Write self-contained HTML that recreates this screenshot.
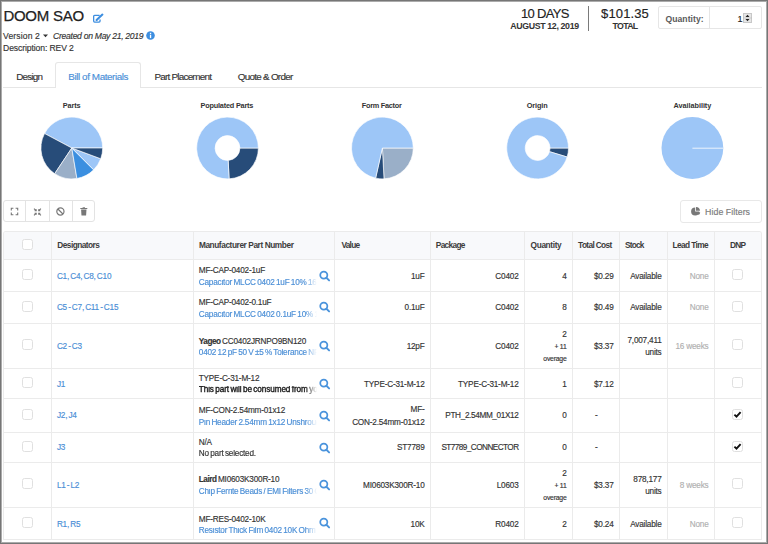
<!DOCTYPE html>
<html><head><meta charset="utf-8"><style>
html,body{margin:0;padding:0;}
body{width:768px;height:544px;overflow:hidden;position:relative;background:#fff;font-family:"Liberation Sans",sans-serif;}
.t{position:absolute;white-space:nowrap;}
.b{position:absolute;}
.clip{overflow:hidden;-webkit-mask-image:linear-gradient(to right,#000 90%,transparent 100%);}
</style></head><body>
<div class="b" style="left:0px;top:0px;width:768px;height:544px;border:1px solid #767676;box-sizing:border-box;"></div>
<div class="b" style="left:1px;top:1px;width:766px;height:542px;border:1px solid #ababab;box-sizing:border-box;"></div>
<div class="t" style="left:3.40px;top:8px;font-size:15px;line-height:15px;letter-spacing:-0.260px;color:#222;-webkit-text-stroke:0.25px #222;"><span>DOOM SAO</span></div>
<svg class="b" style="left:92px;top:13px" width="12" height="11" viewBox="0 0 12 11"><path d="M7.6 2.45 H2.6 Q1.65 2.45 1.65 3.4 V8.1 Q1.65 9.05 2.6 9.05 H7.1 Q8.05 9.05 8.05 8.1 V6.6" fill="none" stroke="#3d8ee0" stroke-width="1.3"/><path d="M4.6 7.0 L10.4 1.6" stroke="#3d8ee0" stroke-width="2.1" stroke-linecap="round"/><path d="M3.9 7.9 L4.3 6.3 L5.5 7.5 Z" fill="#3d8ee0"/></svg>
<div class="t" style="left:3.10px;top:32px;font-size:8.6px;line-height:8.6px;letter-spacing:0.117px;-webkit-text-stroke:0.15px currentColor;color:#333333;"><span>Version 2</span></div>
<svg class="b" style="left:43px;top:34px" width="5" height="4" viewBox="0 0 5 4"><path d="M0 0.5 H5 L2.5 3.2 Z" fill="#333333"/></svg>
<div class="t" style="left:53.10px;top:32px;font-size:8.6px;line-height:8.6px;letter-spacing:-0.294px;-webkit-text-stroke:0.15px currentColor;color:#333333;font-style:italic;"><span>Created on May 21, 2019</span></div>
<svg class="b" style="left:145.9px;top:30.8px" width="9" height="9" viewBox="0 0 9 9"><circle cx="4.5" cy="4.5" r="4.3" fill="#3d8ee0"/><rect x="3.9" y="3.7" width="1.3" height="3.4" fill="#fff"/><rect x="3.9" y="1.8" width="1.3" height="1.2" fill="#fff"/></svg>
<div class="t" style="left:3.10px;top:44px;font-size:8.6px;line-height:8.6px;letter-spacing:-0.107px;-webkit-text-stroke:0.15px currentColor;color:#333333;"><span>Description: REV 2</span></div>
<div class="t" style="left:504.80px;top:7px;font-size:13px;line-height:13px;width:80.00px;text-align:center;letter-spacing:-0.667px;-webkit-text-stroke:0.15px currentColor;color:#222;"><span>10 DAYS</span></div>
<div class="t" style="left:504.50px;top:22px;font-size:8.8px;line-height:8.8px;width:80.00px;text-align:center;letter-spacing:-0.357px;color:#333333;font-weight:bold;"><span>AUGUST 12, 2019</span></div>
<div class="b" style="left:588px;top:6px;width:1px;height:25px;background:#7a7a7a;"></div>
<div class="t" style="left:590.00px;top:7px;font-size:13px;line-height:13px;width:70.00px;text-align:center;letter-spacing:0.135px;-webkit-text-stroke:0.15px currentColor;color:#222;"><span>$101.35</span></div>
<div class="t" style="left:590.00px;top:22px;font-size:8.8px;line-height:8.8px;width:70.00px;text-align:center;letter-spacing:-0.750px;color:#333333;font-weight:bold;"><span>TOTAL</span></div>
<div class="b" style="left:658px;top:6px;width:104px;height:23px;border:1px solid #e6e6e6;border-radius:2px;box-sizing:border-box;"></div>
<div class="b" style="left:709px;top:7px;width:1px;height:21px;background:#e6e6e6;"></div>
<div class="t" style="left:665.40px;top:15px;font-size:8.6px;line-height:8.6px;letter-spacing:0.075px;color:#5a5a5a;font-weight:bold;"><span>Quantity:</span></div>
<div class="t" style="left:737.50px;top:15px;font-size:9px;line-height:9px;letter-spacing:0.000px;-webkit-text-stroke:0.15px currentColor;color:#222;"><span>1</span></div>
<div class="b" style="left:743px;top:13px;width:9px;height:10px;background:#e6e6e6;border:0.5px solid #c8c8c8;box-sizing:border-box;"></div>
<svg class="b" style="left:743px;top:13px" width="9" height="10" viewBox="0 0 9 10"><path d="M2.5 4 L4.5 1.8 L6.5 4 Z M2.5 6 L6.5 6 L4.5 8.2 Z" fill="#222"/><rect x="0" y="4.7" width="9" height="0.6" fill="#bbb"/></svg>
<div class="b" style="left:3px;top:87px;width:759px;height:1px;background:#e6e6e6;"></div>
<div class="b" style="left:55px;top:62px;width:86px;height:26px;border:1px solid #e6e6e6;border-bottom:none;border-radius:3px 3px 0 0;background:#fff;box-sizing:border-box;"></div>
<div class="t" style="left:16.25px;top:72px;font-size:9.9px;line-height:9.9px;letter-spacing:-0.800px;-webkit-text-stroke:0.15px currentColor;color:#333333;"><span>Design</span></div>
<div class="t" style="left:68.30px;top:72px;font-size:9.9px;line-height:9.9px;letter-spacing:-0.420px;-webkit-text-stroke:0.15px currentColor;color:#4a8fd8;"><span>Bill of Materials</span></div>
<div class="t" style="left:154.50px;top:72px;font-size:9.9px;line-height:9.9px;letter-spacing:-0.769px;-webkit-text-stroke:0.15px currentColor;color:#333333;"><span>Part Placement</span></div>
<div class="t" style="left:237.70px;top:72px;font-size:9.9px;line-height:9.9px;letter-spacing:-0.720px;-webkit-text-stroke:0.15px currentColor;color:#333333;"><span>Quote &amp; Order</span></div>
<div class="t" style="left:62.70px;top:102px;font-size:7.3px;line-height:7.3px;letter-spacing:-0.100px;color:#333333;font-weight:bold;"><span>Parts</span></div>
<div class="t" style="left:200.60px;top:102px;font-size:7.3px;line-height:7.3px;letter-spacing:-0.197px;color:#333333;font-weight:bold;"><span>Populated Parts</span></div>
<div class="t" style="left:361.80px;top:102px;font-size:7.3px;line-height:7.3px;letter-spacing:-0.260px;color:#333333;font-weight:bold;"><span>Form Factor</span></div>
<div class="t" style="left:526.80px;top:102px;font-size:7.3px;line-height:7.3px;letter-spacing:-0.120px;color:#333333;font-weight:bold;"><span>Origin</span></div>
<div class="t" style="left:673.50px;top:102px;font-size:7.3px;line-height:7.3px;letter-spacing:-0.040px;color:#333333;font-weight:bold;"><span>Availability</span></div>
<svg class="b" style="left:0;top:0" width="768" height="544" viewBox="0 0 768 544"><path d="M71.80,148.00 L44.52,133.49 A30.9,30.9 0 0 1 102.70,148.00 Z" fill="#9dc6f7" stroke="#fff" stroke-width="0.65" stroke-linejoin="round"/><path d="M71.80,148.00 L54.66,173.71 A30.9,30.9 0 0 1 44.52,133.49 Z" fill="#274c79" stroke="#fff" stroke-width="0.65" stroke-linejoin="round"/><path d="M71.80,148.00 L76.90,178.48 A30.9,30.9 0 0 1 54.66,173.71 Z" fill="#9aafc8" stroke="#fff" stroke-width="0.65" stroke-linejoin="round"/><path d="M71.80,148.00 L93.65,169.85 A30.9,30.9 0 0 1 76.90,178.48 Z" fill="#3b8fe0" stroke="#fff" stroke-width="0.65" stroke-linejoin="round"/><path d="M71.80,148.00 L100.76,158.77 A30.9,30.9 0 0 1 93.65,169.85 Z" fill="#9dc6f7" stroke="#fff" stroke-width="0.65" stroke-linejoin="round"/><path d="M71.80,148.00 L102.70,148.00 A30.9,30.9 0 0 1 100.76,158.77 Z" fill="#274c79" stroke="#fff" stroke-width="0.65" stroke-linejoin="round"/><path d="M239.90,148.00 L258.40,148.00 A30.9,30.9 0 0 1 229.12,178.86 L228.15,160.38 A12.4,12.4 0 0 0 239.90,148.00 Z" fill="#274c79" stroke="#fff" stroke-width="0.65" stroke-linejoin="round"/><path d="M228.15,160.38 L229.12,178.86 A30.9,30.9 0 1 1 258.40,148.00 L239.90,148.00 A12.4,12.4 0 1 0 228.15,160.38 Z" fill="#9dc6f7" stroke="#fff" stroke-width="0.65" stroke-linejoin="round"/><path d="M382.40,148.00 L413.30,148.00 A30.9,30.9 0 0 1 384.02,178.86 Z" fill="#9aafc8" stroke="#fff" stroke-width="0.65" stroke-linejoin="round"/><path d="M382.40,148.00 L384.02,178.86 A30.9,30.9 0 0 1 375.61,178.14 Z" fill="#274c79" stroke="#fff" stroke-width="0.65" stroke-linejoin="round"/><path d="M382.40,148.00 L375.61,178.14 A30.9,30.9 0 1 1 413.30,148.00 Z" fill="#9dc6f7" stroke="#fff" stroke-width="0.65" stroke-linejoin="round"/><path d="M550.00,148.00 L568.50,148.00 A30.9,30.9 0 0 1 567.15,157.03 L549.46,151.63 A12.4,12.4 0 0 0 550.00,148.00 Z" fill="#274c79" stroke="#fff" stroke-width="0.65" stroke-linejoin="round"/><path d="M549.46,151.63 L567.15,157.03 A30.9,30.9 0 1 1 568.50,148.00 L550.00,148.00 A12.4,12.4 0 1 0 549.46,151.63 Z" fill="#9dc6f7" stroke="#fff" stroke-width="0.65" stroke-linejoin="round"/><circle cx="692.4" cy="148.0" r="30.9" fill="#9dc6f7"/><line x1="692.4" y1="148.2" x2="723" y2="148.2" stroke="#fff" stroke-width="0.8"/></svg>
<div class="b" style="left:3px;top:200px;width:92px;height:22px;border:1px solid #e3e3e3;border-radius:3px;box-sizing:border-box;"></div>
<div class="b" style="left:25px;top:201px;width:1px;height:20px;background:#e3e3e3;"></div>
<div class="b" style="left:49px;top:201px;width:1px;height:20px;background:#e3e3e3;"></div>
<div class="b" style="left:72px;top:201px;width:1px;height:20px;background:#e3e3e3;"></div>
<svg class="b" style="left:10px;top:207px" width="9" height="9" viewBox="0 0 9 9"><path d="M1.3 3.4 V1.3 H3.4 M5.6 1.3 H7.7 V3.4 M7.7 5.6 V7.7 H5.6 M3.4 7.7 H1.3 V5.6" fill="none" stroke="#777" stroke-width="1.1"/></svg>
<svg class="b" style="left:33px;top:207.5px" width="9" height="8" viewBox="0 0 9 8"><g fill="none" stroke="#777" stroke-width="1.1"><path d="M1 0.6 L3.2 2.8 M3.2 1.2 V2.8 H1.6"/><path d="M7.9 0.6 L5.7 2.8 M5.7 1.2 V2.8 H7.3"/><path d="M1 7.4 L3.2 5.2 M3.2 6.8 V5.2 H1.6"/><path d="M7.9 7.4 L5.7 5.2 M5.7 6.8 V5.2 H7.3"/></g></svg>
<svg class="b" style="left:56px;top:207px" width="9" height="9" viewBox="0 0 9 9"><circle cx="4.4" cy="4.5" r="3.6" fill="none" stroke="#777" stroke-width="1.2"/><path d="M1.9 2 L6.9 7" stroke="#777" stroke-width="1.2"/></svg>
<svg class="b" style="left:79.5px;top:207px" width="8" height="9" viewBox="0 0 8 9"><rect x="0.3" y="1" width="7" height="1" fill="#777"/><rect x="2.6" y="0.3" width="2.4" height="1" fill="#777"/><path d="M1.1 2.4 H6.5 L6.1 8.4 H1.5 Z" fill="#777"/></svg>
<div class="b" style="left:680px;top:200px;width:82px;height:23px;border:1px solid #e8e8e8;border-radius:3px;box-sizing:border-box;"></div>
<svg class="b" style="left:691px;top:207px" width="10" height="9" viewBox="0 0 10 9"><path d="M4.2 0.4 A4.1 4.1 0 1 0 8.3 4.5 H4.2 Z" fill="#777"/><path d="M5 0 A4 4 0 0 1 9 3.8 H5 Z" fill="#777"/><path d="M5.4 5.2 H9.2 A4 4 0 0 1 7.8 8 Z" fill="#777"/></svg>
<div class="t" style="left:705.10px;top:208px;font-size:8.8px;line-height:8.8px;letter-spacing:0.040px;color:#7a7a7a;-webkit-text-stroke:0.15px #7a7a7a;"><span>Hide Filters</span></div>
<div class="b" style="left:3px;top:231px;width:759px;height:309px;border:1px solid #ebebeb;border-bottom:none;border-radius:3px 3px 0 0;box-sizing:border-box;"></div>
<div class="b" style="left:4px;top:232px;width:757px;height:27px;background:#f8f9fb;border-radius:2px 2px 0 0;"></div>
<div class="b" style="left:51px;top:232px;width:1px;height:308px;background:#ebebeb;"></div>
<div class="b" style="left:193px;top:232px;width:1px;height:308px;background:#ebebeb;"></div>
<div class="b" style="left:334px;top:232px;width:1px;height:308px;background:#ebebeb;"></div>
<div class="b" style="left:430px;top:232px;width:1px;height:308px;background:#ebebeb;"></div>
<div class="b" style="left:524px;top:232px;width:1px;height:308px;background:#ebebeb;"></div>
<div class="b" style="left:572px;top:232px;width:1px;height:308px;background:#ebebeb;"></div>
<div class="b" style="left:619px;top:232px;width:1px;height:308px;background:#ebebeb;"></div>
<div class="b" style="left:667px;top:232px;width:1px;height:308px;background:#ebebeb;"></div>
<div class="b" style="left:714px;top:232px;width:1px;height:308px;background:#ebebeb;"></div>
<div class="b" style="left:3px;top:259px;width:759px;height:1px;background:#ebebeb;"></div>
<div class="b" style="left:3px;top:291px;width:759px;height:1px;background:#ebebeb;"></div>
<div class="b" style="left:3px;top:323px;width:759px;height:1px;background:#ebebeb;"></div>
<div class="b" style="left:3px;top:368px;width:759px;height:1px;background:#ebebeb;"></div>
<div class="b" style="left:3px;top:398px;width:759px;height:1px;background:#ebebeb;"></div>
<div class="b" style="left:3px;top:432px;width:759px;height:1px;background:#ebebeb;"></div>
<div class="b" style="left:3px;top:462px;width:759px;height:1px;background:#ebebeb;"></div>
<div class="b" style="left:3px;top:507px;width:759px;height:1px;background:#ebebeb;"></div>
<div class="b" style="left:3px;top:539px;width:759px;height:1px;background:#ebebeb;"></div>
<div class="b" style="left:22px;top:239px;width:10.5px;height:10.5px;border:1px solid #e0e0e0;border-radius:2.5px;box-sizing:border-box;background:#fff;"></div>
<div class="t" style="left:57.30px;top:241px;font-size:8.3px;line-height:8.3px;letter-spacing:-0.540px;color:#3c3c3c;font-weight:bold;"><span>Designators</span></div>
<div class="t" style="left:198.90px;top:241px;font-size:8.3px;line-height:8.3px;letter-spacing:-0.420px;color:#3c3c3c;font-weight:bold;"><span>Manufacturer Part Number</span></div>
<div class="t" style="left:341.40px;top:241px;font-size:8.3px;line-height:8.3px;letter-spacing:-0.750px;color:#3c3c3c;font-weight:bold;"><span>Value</span></div>
<div class="t" style="left:435.80px;top:241px;font-size:8.3px;line-height:8.3px;letter-spacing:-0.667px;color:#3c3c3c;font-weight:bold;"><span>Package</span></div>
<div class="t" style="left:530.60px;top:241px;font-size:8.3px;line-height:8.3px;letter-spacing:-0.369px;color:#3c3c3c;font-weight:bold;"><span>Quantity</span></div>
<div class="t" style="left:578.10px;top:241px;font-size:8.3px;line-height:8.3px;letter-spacing:-0.651px;color:#3c3c3c;font-weight:bold;"><span>Total Cost</span></div>
<div class="t" style="left:625.00px;top:241px;font-size:8.3px;line-height:8.3px;letter-spacing:-0.800px;color:#3c3c3c;font-weight:bold;"><span>Stock</span></div>
<div class="t" style="left:672.60px;top:241px;font-size:8.3px;line-height:8.3px;letter-spacing:-0.600px;color:#3c3c3c;font-weight:bold;"><span>Lead Time</span></div>
<div class="t" style="left:729.90px;top:241px;font-size:8.3px;line-height:8.3px;letter-spacing:-0.700px;color:#3c3c3c;font-weight:bold;"><span>DNP</span></div>
<div class="b" style="left:22px;top:269px;width:10.5px;height:10.5px;border:1px solid #e0e0e0;border-radius:2.5px;box-sizing:border-box;background:#fff;"></div>
<div class="t" style="left:56.90px;top:273px;font-size:8.2px;line-height:8.2px;letter-spacing:-0.200px;word-spacing:-0.9px;-webkit-text-stroke:0.15px currentColor;color:#4a8ed6;"><span>C1, C4, C8, C10</span></div>
<div class="t" style="left:198.80px;top:267px;font-size:8.2px;line-height:8.2px;letter-spacing:-0.200px;word-spacing:-0.7px;-webkit-text-stroke:0.15px currentColor;color:#333333;"><span>MF-CAP-0402-1uF</span></div>
<div class="t clip" style="left:198.8px;top:279px;width:118px;font-size:8.2px;line-height:8.2px;letter-spacing:-0.2px;word-spacing:-0.7px;-webkit-text-stroke:0.15px currentColor;color:#4a8ed6;">Capacitor MLCC 0402 1uF 10% 16V X5R</div>
<svg class="b" style="left:318.8px;top:269.7px" width="12" height="12" viewBox="0 0 12 12"><circle cx="4.8" cy="5.1" r="3.55" fill="none" stroke="#4a93dc" stroke-width="1.75"/><path d="M7.4 7.8 L10.1 10.4" stroke="#4a93dc" stroke-width="1.9" stroke-linecap="round"/></svg>
<div class="t" style="left:334.00px;top:273px;font-size:8.2px;line-height:8.2px;width:90.50px;text-align:right;letter-spacing:-0.200px;word-spacing:-0.7px;-webkit-text-stroke:0.15px currentColor;color:#333333;"><span>1uF</span></div>
<div class="t" style="left:430.00px;top:273px;font-size:8.2px;line-height:8.2px;width:88.50px;text-align:right;letter-spacing:-0.200px;word-spacing:-0.7px;-webkit-text-stroke:0.15px currentColor;color:#333333;"><span>C0402</span></div>
<div class="t" style="left:524.00px;top:273px;font-size:8.2px;line-height:8.2px;width:42.50px;text-align:right;letter-spacing:-0.200px;word-spacing:-0.7px;-webkit-text-stroke:0.15px currentColor;color:#333333;"><span>4</span></div>
<div class="t" style="left:572.00px;top:273px;font-size:8.2px;line-height:8.2px;width:41.50px;text-align:right;letter-spacing:-0.200px;word-spacing:-0.7px;-webkit-text-stroke:0.15px currentColor;color:#333333;"><span>$0.29</span></div>
<div class="t" style="left:619.00px;top:273px;font-size:8.2px;line-height:8.2px;width:42.50px;text-align:right;letter-spacing:-0.200px;word-spacing:-0.7px;-webkit-text-stroke:0.15px currentColor;color:#333333;"><span>Available</span></div>
<div class="t" style="left:667.00px;top:273px;font-size:8.2px;line-height:8.2px;width:41.50px;text-align:right;letter-spacing:-0.200px;word-spacing:-0.7px;-webkit-text-stroke:0.15px currentColor;color:#b0b0b0;"><span>None</span></div>
<div class="b" style="left:732px;top:269px;width:10.5px;height:10.5px;border:1px solid #e0e0e0;border-radius:2.5px;box-sizing:border-box;background:#fff;"></div>
<div class="b" style="left:22px;top:301px;width:10.5px;height:10.5px;border:1px solid #e0e0e0;border-radius:2.5px;box-sizing:border-box;background:#fff;"></div>
<div class="t" style="left:56.90px;top:304px;font-size:8.2px;line-height:8.2px;letter-spacing:-0.200px;word-spacing:-0.9px;-webkit-text-stroke:0.15px currentColor;color:#4a8ed6;"><span>C5 - C7, C11 - C15</span></div>
<div class="t" style="left:198.80px;top:299px;font-size:8.2px;line-height:8.2px;letter-spacing:-0.200px;word-spacing:-0.7px;-webkit-text-stroke:0.15px currentColor;color:#333333;"><span>MF-CAP-0402-0.1uF</span></div>
<div class="t clip" style="left:198.8px;top:311px;width:118px;font-size:8.2px;line-height:8.2px;letter-spacing:-0.2px;word-spacing:-0.7px;-webkit-text-stroke:0.15px currentColor;color:#4a8ed6;">Capacitor MLCC 0402 0.1uF 10% 16V X7R</div>
<svg class="b" style="left:318.8px;top:301.0px" width="12" height="12" viewBox="0 0 12 12"><circle cx="4.8" cy="5.1" r="3.55" fill="none" stroke="#4a93dc" stroke-width="1.75"/><path d="M7.4 7.8 L10.1 10.4" stroke="#4a93dc" stroke-width="1.9" stroke-linecap="round"/></svg>
<div class="t" style="left:334.00px;top:304px;font-size:8.2px;line-height:8.2px;width:90.50px;text-align:right;letter-spacing:-0.200px;word-spacing:-0.7px;-webkit-text-stroke:0.15px currentColor;color:#333333;"><span>0.1uF</span></div>
<div class="t" style="left:430.00px;top:304px;font-size:8.2px;line-height:8.2px;width:88.50px;text-align:right;letter-spacing:-0.200px;word-spacing:-0.7px;-webkit-text-stroke:0.15px currentColor;color:#333333;"><span>C0402</span></div>
<div class="t" style="left:524.00px;top:304px;font-size:8.2px;line-height:8.2px;width:42.50px;text-align:right;letter-spacing:-0.200px;word-spacing:-0.7px;-webkit-text-stroke:0.15px currentColor;color:#333333;"><span>8</span></div>
<div class="t" style="left:572.00px;top:304px;font-size:8.2px;line-height:8.2px;width:41.50px;text-align:right;letter-spacing:-0.200px;word-spacing:-0.7px;-webkit-text-stroke:0.15px currentColor;color:#333333;"><span>$0.49</span></div>
<div class="t" style="left:619.00px;top:304px;font-size:8.2px;line-height:8.2px;width:42.50px;text-align:right;letter-spacing:-0.200px;word-spacing:-0.7px;-webkit-text-stroke:0.15px currentColor;color:#333333;"><span>Available</span></div>
<div class="t" style="left:667.00px;top:304px;font-size:8.2px;line-height:8.2px;width:41.50px;text-align:right;letter-spacing:-0.200px;word-spacing:-0.7px;-webkit-text-stroke:0.15px currentColor;color:#b0b0b0;"><span>None</span></div>
<div class="b" style="left:732px;top:301px;width:10.5px;height:10.5px;border:1px solid #e0e0e0;border-radius:2.5px;box-sizing:border-box;background:#fff;"></div>
<div class="b" style="left:22px;top:339px;width:10.5px;height:10.5px;border:1px solid #e0e0e0;border-radius:2.5px;box-sizing:border-box;background:#fff;"></div>
<div class="t" style="left:56.90px;top:343px;font-size:8.2px;line-height:8.2px;letter-spacing:-0.200px;word-spacing:-0.9px;-webkit-text-stroke:0.15px currentColor;color:#4a8ed6;"><span>C2 - C3</span></div>
<div class="t" style="left:198.80px;top:338px;font-size:8.2px;line-height:8.2px;letter-spacing:-0.200px;word-spacing:-0.7px;-webkit-text-stroke:0.15px currentColor;color:#333333;"><span><b style="letter-spacing:-0.45px">Yageo</b> CC0402JRNPO9BN120</span></div>
<div class="t clip" style="left:198.8px;top:349px;width:118px;font-size:8.2px;line-height:8.2px;letter-spacing:-0.2px;word-spacing:-0.7px;-webkit-text-stroke:0.15px currentColor;color:#4a8ed6;">0402 12 pF 50 V ±5 % Tolerance NP0</div>
<svg class="b" style="left:318.8px;top:339.5px" width="12" height="12" viewBox="0 0 12 12"><circle cx="4.8" cy="5.1" r="3.55" fill="none" stroke="#4a93dc" stroke-width="1.75"/><path d="M7.4 7.8 L10.1 10.4" stroke="#4a93dc" stroke-width="1.9" stroke-linecap="round"/></svg>
<div class="t" style="left:334.00px;top:343px;font-size:8.2px;line-height:8.2px;width:90.50px;text-align:right;letter-spacing:-0.200px;word-spacing:-0.7px;-webkit-text-stroke:0.15px currentColor;color:#333333;"><span>12pF</span></div>
<div class="t" style="left:430.00px;top:343px;font-size:8.2px;line-height:8.2px;width:88.50px;text-align:right;letter-spacing:-0.200px;word-spacing:-0.7px;-webkit-text-stroke:0.15px currentColor;color:#333333;"><span>C0402</span></div>
<div class="t" style="left:524.00px;top:331px;font-size:8.2px;line-height:8.2px;width:42.50px;text-align:right;letter-spacing:-0.200px;word-spacing:-0.7px;-webkit-text-stroke:0.15px currentColor;color:#333333;"><span>2</span></div>
<div class="t" style="left:524.00px;top:344px;font-size:6.8px;line-height:6.8px;width:42.50px;text-align:right;letter-spacing:-0.200px;word-spacing:0px;-webkit-text-stroke:0.15px currentColor;color:#333333;"><span>+&nbsp;11</span></div>
<div class="t" style="left:524.00px;top:356px;font-size:6.8px;line-height:6.8px;width:42.50px;text-align:right;letter-spacing:-0.200px;word-spacing:-0.7px;-webkit-text-stroke:0.15px currentColor;color:#333333;"><span>overage</span></div>
<div class="t" style="left:572.00px;top:343px;font-size:8.2px;line-height:8.2px;width:41.50px;text-align:right;letter-spacing:-0.200px;word-spacing:-0.7px;-webkit-text-stroke:0.15px currentColor;color:#333333;"><span>$3.37</span></div>
<div class="t" style="left:619.00px;top:337px;font-size:8.2px;line-height:8.2px;width:42.50px;text-align:right;letter-spacing:-0.200px;word-spacing:-0.7px;-webkit-text-stroke:0.15px currentColor;color:#333333;"><span>7,007,411</span></div>
<div class="t" style="left:619.00px;top:349px;font-size:8.2px;line-height:8.2px;width:42.50px;text-align:right;letter-spacing:-0.200px;word-spacing:-0.7px;-webkit-text-stroke:0.15px currentColor;color:#333333;"><span>units</span></div>
<div class="t" style="left:667.00px;top:343px;font-size:8.2px;line-height:8.2px;width:41.50px;text-align:right;letter-spacing:-0.200px;word-spacing:0px;-webkit-text-stroke:0.15px currentColor;color:#b0b0b0;"><span>16 weeks</span></div>
<div class="b" style="left:732px;top:339px;width:10.5px;height:10.5px;border:1px solid #e0e0e0;border-radius:2.5px;box-sizing:border-box;background:#fff;"></div>
<div class="b" style="left:22px;top:377px;width:10.5px;height:10.5px;border:1px solid #e0e0e0;border-radius:2.5px;box-sizing:border-box;background:#fff;"></div>
<div class="t" style="left:56.90px;top:381px;font-size:8.2px;line-height:8.2px;letter-spacing:-0.200px;word-spacing:-0.9px;-webkit-text-stroke:0.15px currentColor;color:#4a8ed6;"><span>J1</span></div>
<div class="t" style="left:198.80px;top:375px;font-size:8.2px;line-height:8.2px;letter-spacing:-0.200px;word-spacing:-0.7px;-webkit-text-stroke:0.15px currentColor;color:#333333;"><span>TYPE-C-31-M-12</span></div>
<div class="t clip" style="left:198.8px;top:386px;width:118px;font-size:8.2px;line-height:8.2px;letter-spacing:-0.2px;word-spacing:-0.7px;color:#1a1a1a;-webkit-text-stroke:0.35px #1a1a1a;letter-spacing:-0.1px;">This part will be consumed from your inventory</div>
<svg class="b" style="left:318.8px;top:378.2px" width="12" height="12" viewBox="0 0 12 12"><circle cx="4.8" cy="5.1" r="3.55" fill="none" stroke="#4a93dc" stroke-width="1.75"/><path d="M7.4 7.8 L10.1 10.4" stroke="#4a93dc" stroke-width="1.9" stroke-linecap="round"/></svg>
<div class="t" style="left:334.00px;top:381px;font-size:8.2px;line-height:8.2px;width:90.50px;text-align:right;letter-spacing:-0.200px;word-spacing:-0.7px;-webkit-text-stroke:0.15px currentColor;color:#333333;"><span>TYPE-C-31-M-12</span></div>
<div class="t" style="left:430.00px;top:381px;font-size:8.2px;line-height:8.2px;width:88.50px;text-align:right;letter-spacing:-0.200px;word-spacing:-0.7px;-webkit-text-stroke:0.15px currentColor;color:#333333;"><span>TYPE-C-31-M-12</span></div>
<div class="t" style="left:524.00px;top:381px;font-size:8.2px;line-height:8.2px;width:42.50px;text-align:right;letter-spacing:-0.200px;word-spacing:-0.7px;-webkit-text-stroke:0.15px currentColor;color:#333333;"><span>1</span></div>
<div class="t" style="left:572.00px;top:381px;font-size:8.2px;line-height:8.2px;width:41.50px;text-align:right;letter-spacing:-0.200px;word-spacing:-0.7px;-webkit-text-stroke:0.15px currentColor;color:#333333;"><span>$7.12</span></div>
<div class="b" style="left:732px;top:377px;width:10.5px;height:10.5px;border:1px solid #e0e0e0;border-radius:2.5px;box-sizing:border-box;background:#fff;"></div>
<div class="b" style="left:22px;top:409px;width:10.5px;height:10.5px;border:1px solid #e0e0e0;border-radius:2.5px;box-sizing:border-box;background:#fff;"></div>
<div class="t" style="left:56.90px;top:412px;font-size:8.2px;line-height:8.2px;letter-spacing:-0.200px;word-spacing:-0.9px;-webkit-text-stroke:0.15px currentColor;color:#4a8ed6;"><span>J2, J4</span></div>
<div class="t" style="left:198.80px;top:407px;font-size:8.2px;line-height:8.2px;letter-spacing:-0.200px;word-spacing:-0.7px;-webkit-text-stroke:0.15px currentColor;color:#333333;"><span>MF-CON-2.54mm-01x12</span></div>
<div class="t clip" style="left:198.8px;top:419px;width:118px;font-size:8.2px;line-height:8.2px;letter-spacing:-0.2px;word-spacing:-0.7px;-webkit-text-stroke:0.15px currentColor;color:#4a8ed6;">Pin Header 2.54mm 1x12 Unshrouded</div>
<svg class="b" style="left:318.8px;top:409.6px" width="12" height="12" viewBox="0 0 12 12"><circle cx="4.8" cy="5.1" r="3.55" fill="none" stroke="#4a93dc" stroke-width="1.75"/><path d="M7.4 7.8 L10.1 10.4" stroke="#4a93dc" stroke-width="1.9" stroke-linecap="round"/></svg>
<div class="t" style="left:334.00px;top:406px;font-size:8.2px;line-height:8.2px;width:90.50px;text-align:right;letter-spacing:-0.200px;word-spacing:-0.7px;-webkit-text-stroke:0.15px currentColor;color:#333333;"><span>MF-</span></div>
<div class="t" style="left:334.00px;top:419px;font-size:8.2px;line-height:8.2px;width:90.50px;text-align:right;letter-spacing:-0.200px;word-spacing:-0.7px;-webkit-text-stroke:0.15px currentColor;color:#333333;"><span>CON-2.54mm-01x12</span></div>
<div class="t" style="left:430.00px;top:412px;font-size:8.2px;line-height:8.2px;width:88.50px;text-align:right;letter-spacing:-0.350px;word-spacing:-0.7px;-webkit-text-stroke:0.15px currentColor;color:#333333;"><span>PTH_2.54MM_01X12</span></div>
<div class="t" style="left:524.00px;top:412px;font-size:8.2px;line-height:8.2px;width:42.50px;text-align:right;letter-spacing:-0.200px;word-spacing:-0.7px;-webkit-text-stroke:0.15px currentColor;color:#333333;"><span>0</span></div>
<div class="t" style="left:572.00px;top:412px;font-size:8.2px;line-height:8.2px;width:25.50px;text-align:right;letter-spacing:-0.200px;word-spacing:-0.7px;-webkit-text-stroke:0.15px currentColor;color:#333333;"><span>-</span></div>
<div class="b" style="left:732px;top:409px;width:10.5px;height:10.5px;border:1px solid #e0e0e0;border-radius:2.5px;box-sizing:border-box;background:#fff;"></div>
<svg class="b" style="left:732px;top:409px" width="11" height="11" viewBox="0 0 11 11"><path d="M2.4 5.6 L4.5 7.6 L8.6 3.2" fill="none" stroke="#111" stroke-width="1.9"/></svg>
<div class="b" style="left:22px;top:441px;width:10.5px;height:10.5px;border:1px solid #e0e0e0;border-radius:2.5px;box-sizing:border-box;background:#fff;"></div>
<div class="t" style="left:56.90px;top:444px;font-size:8.2px;line-height:8.2px;letter-spacing:-0.200px;word-spacing:-0.9px;-webkit-text-stroke:0.15px currentColor;color:#4a8ed6;"><span>J3</span></div>
<div class="t" style="left:198.80px;top:439px;font-size:8.2px;line-height:8.2px;letter-spacing:-0.200px;word-spacing:-0.7px;-webkit-text-stroke:0.15px currentColor;color:#333333;"><span>N/A</span></div>
<div class="t clip" style="left:198.8px;top:450px;width:118px;font-size:8.2px;line-height:8.2px;letter-spacing:-0.2px;word-spacing:-0.7px;-webkit-text-stroke:0.15px currentColor;color:#333333;">No part selected.</div>
<svg class="b" style="left:318.8px;top:441.9px" width="12" height="12" viewBox="0 0 12 12"><circle cx="4.8" cy="5.1" r="3.55" fill="none" stroke="#4a93dc" stroke-width="1.75"/><path d="M7.4 7.8 L10.1 10.4" stroke="#4a93dc" stroke-width="1.9" stroke-linecap="round"/></svg>
<div class="t" style="left:334.00px;top:444px;font-size:8.2px;line-height:8.2px;width:90.50px;text-align:right;letter-spacing:-0.200px;word-spacing:-0.7px;-webkit-text-stroke:0.15px currentColor;color:#333333;"><span>ST7789</span></div>
<div class="t" style="left:430.00px;top:444px;font-size:8.2px;line-height:8.2px;width:88.50px;text-align:right;letter-spacing:-0.550px;word-spacing:-0.7px;-webkit-text-stroke:0.15px currentColor;color:#333333;"><span>ST7789_CONNECTOR</span></div>
<div class="t" style="left:524.00px;top:444px;font-size:8.2px;line-height:8.2px;width:42.50px;text-align:right;letter-spacing:-0.200px;word-spacing:-0.7px;-webkit-text-stroke:0.15px currentColor;color:#333333;"><span>0</span></div>
<div class="t" style="left:572.00px;top:444px;font-size:8.2px;line-height:8.2px;width:25.50px;text-align:right;letter-spacing:-0.200px;word-spacing:-0.7px;-webkit-text-stroke:0.15px currentColor;color:#333333;"><span>-</span></div>
<div class="b" style="left:732px;top:441px;width:10.5px;height:10.5px;border:1px solid #e0e0e0;border-radius:2.5px;box-sizing:border-box;background:#fff;"></div>
<svg class="b" style="left:732px;top:441px" width="11" height="11" viewBox="0 0 11 11"><path d="M2.4 5.6 L4.5 7.6 L8.6 3.2" fill="none" stroke="#111" stroke-width="1.9"/></svg>
<div class="b" style="left:22px;top:478px;width:10.5px;height:10.5px;border:1px solid #e0e0e0;border-radius:2.5px;box-sizing:border-box;background:#fff;"></div>
<div class="t" style="left:56.90px;top:482px;font-size:8.2px;line-height:8.2px;letter-spacing:-0.200px;word-spacing:-0.9px;-webkit-text-stroke:0.15px currentColor;color:#4a8ed6;"><span>L1 - L2</span></div>
<div class="t" style="left:198.80px;top:476px;font-size:8.2px;line-height:8.2px;letter-spacing:-0.200px;word-spacing:-0.7px;-webkit-text-stroke:0.15px currentColor;color:#333333;"><span><b style="letter-spacing:-0.45px">Laird</b> MI0603K300R-10</span></div>
<div class="t clip" style="left:198.8px;top:488px;width:118px;font-size:8.2px;line-height:8.2px;letter-spacing:-0.2px;word-spacing:-0.7px;-webkit-text-stroke:0.15px currentColor;color:#4a8ed6;">Chip Ferrite Beads / EMI Filters 30 Ohm</div>
<svg class="b" style="left:318.8px;top:478.5px" width="12" height="12" viewBox="0 0 12 12"><circle cx="4.8" cy="5.1" r="3.55" fill="none" stroke="#4a93dc" stroke-width="1.75"/><path d="M7.4 7.8 L10.1 10.4" stroke="#4a93dc" stroke-width="1.9" stroke-linecap="round"/></svg>
<div class="t" style="left:334.00px;top:482px;font-size:8.2px;line-height:8.2px;width:90.50px;text-align:right;letter-spacing:-0.200px;word-spacing:-0.7px;-webkit-text-stroke:0.15px currentColor;color:#333333;"><span>MI0603K300R-10</span></div>
<div class="t" style="left:430.00px;top:482px;font-size:8.2px;line-height:8.2px;width:88.50px;text-align:right;letter-spacing:-0.200px;word-spacing:-0.7px;-webkit-text-stroke:0.15px currentColor;color:#333333;"><span>L0603</span></div>
<div class="t" style="left:524.00px;top:470px;font-size:8.2px;line-height:8.2px;width:42.50px;text-align:right;letter-spacing:-0.200px;word-spacing:-0.7px;-webkit-text-stroke:0.15px currentColor;color:#333333;"><span>2</span></div>
<div class="t" style="left:524.00px;top:483px;font-size:6.8px;line-height:6.8px;width:42.50px;text-align:right;letter-spacing:-0.200px;word-spacing:0px;-webkit-text-stroke:0.15px currentColor;color:#333333;"><span>+&nbsp;11</span></div>
<div class="t" style="left:524.00px;top:495px;font-size:6.8px;line-height:6.8px;width:42.50px;text-align:right;letter-spacing:-0.200px;word-spacing:-0.7px;-webkit-text-stroke:0.15px currentColor;color:#333333;"><span>overage</span></div>
<div class="t" style="left:572.00px;top:482px;font-size:8.2px;line-height:8.2px;width:41.50px;text-align:right;letter-spacing:-0.200px;word-spacing:-0.7px;-webkit-text-stroke:0.15px currentColor;color:#333333;"><span>$3.37</span></div>
<div class="t" style="left:619.00px;top:476px;font-size:8.2px;line-height:8.2px;width:42.50px;text-align:right;letter-spacing:-0.200px;word-spacing:-0.7px;-webkit-text-stroke:0.15px currentColor;color:#333333;"><span>878,177</span></div>
<div class="t" style="left:619.00px;top:488px;font-size:8.2px;line-height:8.2px;width:42.50px;text-align:right;letter-spacing:-0.200px;word-spacing:-0.7px;-webkit-text-stroke:0.15px currentColor;color:#333333;"><span>units</span></div>
<div class="t" style="left:667.00px;top:482px;font-size:8.2px;line-height:8.2px;width:41.50px;text-align:right;letter-spacing:-0.200px;word-spacing:0px;-webkit-text-stroke:0.15px currentColor;color:#b0b0b0;"><span>8 weeks</span></div>
<div class="b" style="left:732px;top:478px;width:10.5px;height:10.5px;border:1px solid #e0e0e0;border-radius:2.5px;box-sizing:border-box;background:#fff;"></div>
<div class="b" style="left:22px;top:517px;width:10.5px;height:10.5px;border:1px solid #e0e0e0;border-radius:2.5px;box-sizing:border-box;background:#fff;"></div>
<div class="t" style="left:56.90px;top:521px;font-size:8.2px;line-height:8.2px;letter-spacing:-0.200px;word-spacing:-0.9px;-webkit-text-stroke:0.15px currentColor;color:#4a8ed6;"><span>R1, R5</span></div>
<div class="t" style="left:198.80px;top:516px;font-size:8.2px;line-height:8.2px;letter-spacing:-0.200px;word-spacing:-0.7px;-webkit-text-stroke:0.15px currentColor;color:#333333;"><span>MF-RES-0402-10K</span></div>
<div class="t clip" style="left:198.8px;top:527px;width:118px;font-size:8.2px;line-height:8.2px;letter-spacing:-0.2px;word-spacing:-0.7px;-webkit-text-stroke:0.15px currentColor;color:#4a8ed6;">Resistor Thick Film 0402 10K Ohm 1%</div>
<svg class="b" style="left:318.8px;top:516.6px" width="12" height="12" viewBox="0 0 12 12"><circle cx="4.8" cy="5.1" r="3.55" fill="none" stroke="#4a93dc" stroke-width="1.75"/><path d="M7.4 7.8 L10.1 10.4" stroke="#4a93dc" stroke-width="1.9" stroke-linecap="round"/></svg>
<div class="t" style="left:334.00px;top:521px;font-size:8.2px;line-height:8.2px;width:90.50px;text-align:right;letter-spacing:-0.200px;word-spacing:-0.7px;-webkit-text-stroke:0.15px currentColor;color:#333333;"><span>10K</span></div>
<div class="t" style="left:430.00px;top:521px;font-size:8.2px;line-height:8.2px;width:88.50px;text-align:right;letter-spacing:-0.200px;word-spacing:-0.7px;-webkit-text-stroke:0.15px currentColor;color:#333333;"><span>R0402</span></div>
<div class="t" style="left:524.00px;top:521px;font-size:8.2px;line-height:8.2px;width:42.50px;text-align:right;letter-spacing:-0.200px;word-spacing:-0.7px;-webkit-text-stroke:0.15px currentColor;color:#333333;"><span>2</span></div>
<div class="t" style="left:572.00px;top:521px;font-size:8.2px;line-height:8.2px;width:41.50px;text-align:right;letter-spacing:-0.200px;word-spacing:-0.7px;-webkit-text-stroke:0.15px currentColor;color:#333333;"><span>$0.24</span></div>
<div class="t" style="left:619.00px;top:521px;font-size:8.2px;line-height:8.2px;width:42.50px;text-align:right;letter-spacing:-0.200px;word-spacing:-0.7px;-webkit-text-stroke:0.15px currentColor;color:#333333;"><span>Available</span></div>
<div class="t" style="left:667.00px;top:521px;font-size:8.2px;line-height:8.2px;width:41.50px;text-align:right;letter-spacing:-0.200px;word-spacing:-0.7px;-webkit-text-stroke:0.15px currentColor;color:#b0b0b0;"><span>None</span></div>
<div class="b" style="left:732px;top:517px;width:10.5px;height:10.5px;border:1px solid #e0e0e0;border-radius:2.5px;box-sizing:border-box;background:#fff;"></div>
</body></html>
